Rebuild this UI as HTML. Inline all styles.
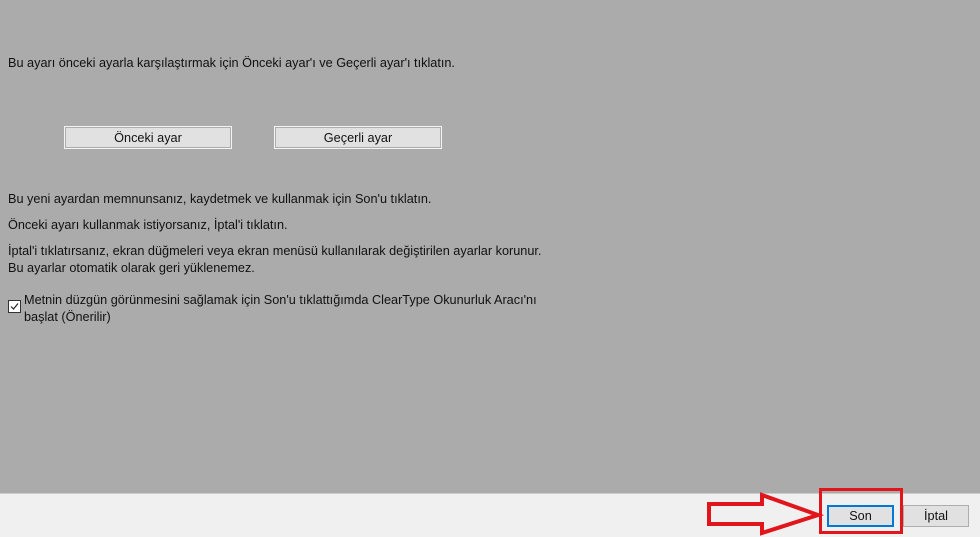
<!DOCTYPE html>
<html><head><meta charset="utf-8"><style>
body{margin:0;width:980px;height:536px;background:#ababab;font-family:"Liberation Sans",sans-serif;font-size:12.7px;color:#111;position:relative;overflow:hidden}
.t{position:absolute;left:8px;white-space:nowrap}
.btn{position:absolute;background:#e1e1e1;border:1px solid #f4f4f4;box-shadow:inset 0 0 0 1px #adadad;text-align:center;box-sizing:border-box}
.bar{position:absolute;left:0;top:493px;width:980px;height:43px;background:#f0f0f0;border-top:1px solid #ccc}
</style></head><body>
<div class="t" style="top:56px">Bu ayarı önceki ayarla karşılaştırmak için Önceki ayar'ı ve Geçerli ayar'ı tıklatın.</div>
<div class="btn" style="left:64px;top:126px;width:168px;height:23px;line-height:23px">Önceki ayar</div>
<div class="btn" style="left:274px;top:126px;width:168px;height:23px;line-height:23px">Geçerli ayar</div>
<div class="t" style="top:192px">Bu yeni ayardan memnunsanız, kaydetmek ve kullanmak için Son'u tıklatın.</div>
<div class="t" style="top:218px">Önceki ayarı kullanmak istiyorsanız, İptal'i tıklatın.</div>
<div class="t" style="top:244px">İptal'i tıklatırsanız, ekran düğmeleri veya ekran menüsü kullanılarak değiştirilen ayarlar korunur.</div>
<div class="t" style="top:261px">Bu ayarlar otomatik olarak geri yüklenemez.</div>
<div style="position:absolute;left:8px;top:300px;width:11px;height:11px;border:1px solid #333;background:#fff"><svg width="11" height="11" style="position:absolute;left:0;top:0"><path d="M2 5.5 L4.5 8 L9 2.5" stroke="#222" stroke-width="1.2" fill="none"/></svg></div>
<div class="t" style="left:24px;top:293px">Metnin düzgün görünmesini sağlamak için Son'u tıklattığımda ClearType Okunurluk Aracı'nı</div>
<div class="t" style="left:24px;top:310px">başlat (Önerilir)</div>
<div class="bar"></div>
<div class="btn" style="left:827px;top:505px;width:67px;height:22px;line-height:19px;border:2px solid #0078d7;box-shadow:none">Son</div>
<div class="btn" style="left:903px;top:505px;width:66px;height:22px;line-height:20px;border:1px solid #adadad;box-shadow:none">İptal</div>
<div style="position:absolute;left:819px;top:488px;width:84px;height:46px;box-sizing:border-box;border:3px solid #e0161c"></div>
<svg style="position:absolute;left:700px;top:490px" width="130" height="46"><path d="M9 14 L62 14 L62 5 L118 25 L62 43 L62 34 L9 34 Z" fill="none" stroke="#e0161c" stroke-width="4"/></svg>
</body></html>
